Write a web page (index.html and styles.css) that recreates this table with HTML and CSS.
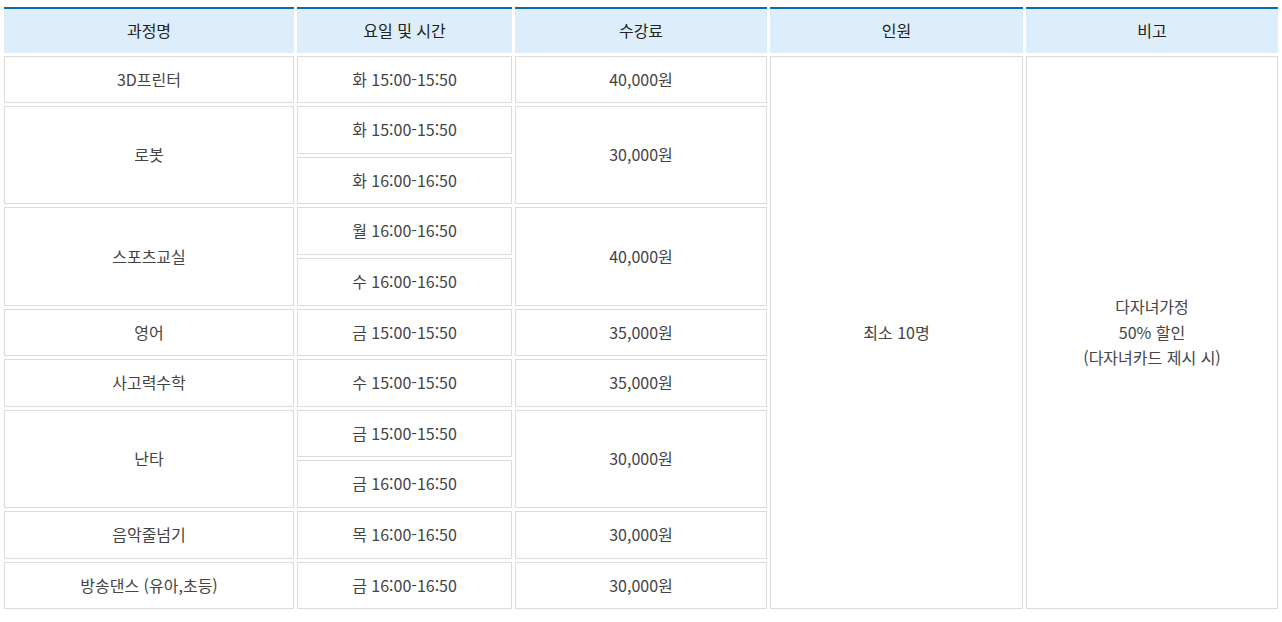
FILE: index.html
```html
<!DOCTYPE html>
<html lang="ko">
<head>
    <meta charset="UTF-8">
    <meta name="viewport" content="width=device-width, initial-scale=1.0">
    <title>방과후 과정 안내</title>
    <link rel="stylesheet" href="styles.css">
</head>
<body>
    <div class="contenedor-tabla">
        <table class="tabla-cursos">
            <thead>
                <tr>
                    <th class="col-curso">과정명</th>
                    <th class="col-horario">요일 및 시간</th>
                    <th class="col-precio">수강료</th>
                    <th class="col-cupo">인원</th>
                    <th class="col-nota">비고</th>
                </tr>
            </thead>
            <tbody>
                <tr>
                    <td>3D프린터</td>
                    <td>화 15:00-15:50</td>
                    <td>40,000원</td>
                    <td rowspan="11">최소 10명</td>
                    <td rowspan="11">다자녀가정<br>50% 할인<br>(다자녀카드 제시 시)</td>
                </tr>
                <tr>
                    <td rowspan="2">로봇</td>
                    <td>화 15:00-15:50</td>
                    <td rowspan="2">30,000원</td>
                </tr>
                <tr>
                    <td>화 16:00-16:50</td>
                </tr>
                <tr>
                    <td rowspan="2">스포츠교실</td>
                    <td>월 16:00-16:50</td>
                    <td rowspan="2">40,000원</td>
                </tr>
                <tr>
                    <td>수 16:00-16:50</td>
                </tr>
                <tr>
                    <td>영어</td>
                    <td>금 15:00-15:50</td>
                    <td>35,000원</td>
                </tr>
                <tr>
                    <td>사고력수학</td>
                    <td>수 15:00-15:50</td>
                    <td>35,000원</td>
                </tr>
                <tr>
                    <td rowspan="2">난타</td>
                    <td>금 15:00-15:50</td>
                    <td rowspan="2">30,000원</td>
                </tr>
                <tr>
                    <td>금 16:00-16:50</td>
                </tr>
                <tr>
                    <td>음악줄넘기</td>
                    <td>목 16:00-16:50</td>
                    <td>30,000원</td>
                </tr>
                <tr>
                    <td>방송댄스 (유아,초등)</td>
                    <td>금 16:00-16:50</td>
                    <td>30,000원</td>
                </tr>
            </tbody>
        </table>
    </div>
</body>
</html>
```

FILE: styles.css
```css
body {
    font-family: "Noto Sans CJK KR", "Noto Sans", sans-serif;
    background-color: #fff;
    margin: 0;
    padding: 0;
}
.contenedor-tabla {
    padding: 4px 1px 0 1px;
}
.tabla-cursos {
    width: 100%;
    table-layout: fixed;
    border-collapse: separate;
    border-spacing: 3px;
    font-size: 16px;
    line-height: 25.6px;
    text-align: center;
}
.tabla-cursos th,
.tabla-cursos td {
    box-sizing: border-box;
    vertical-align: middle;
}
.tabla-cursos th {
    background-color: #ddeefa;
    border-top: 2px solid #0a6bb5;
    padding: 9px 10px;
    font-weight: 400;
    color: #222;
}
.tabla-cursos td {
    border: 1px solid #dcdcdc;
    padding: 10px;
    color: #444;
}
.col-curso {
    width: 290px;
}
.col-horario {
    width: 215px;
}
.col-precio {
    width: 252px;
}
.col-cupo {
    width: 253px;
}
.col-nota {
    width: 252px;
}
```
